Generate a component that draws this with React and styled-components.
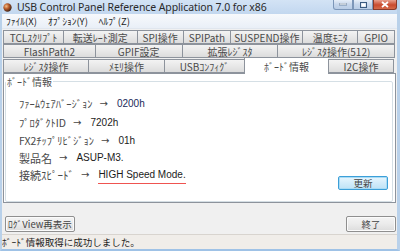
import styled, { createGlobalStyle } from 'styled-components';

const GlobalStyle = createGlobalStyle`
  html, body {
    margin: 0;
    padding: 0;
    background: #ffffff;
  }
  * {
    box-sizing: border-box;
  }
`;

const JP = `"Noto Sans CJK JP", "Noto Sans", sans-serif`;

const Window = styled.div`
  width: 400px;
  height: 251px;
  display: flex;
  flex-direction: column;
  background: #f0f0f0;
  border-left: 2px solid #b9d1ea;
  border-right: 3px solid #b9d1ea;
  border-bottom: 2px solid #9fc2e6;
  font-family: ${JP};
  overflow: hidden;
`;

const TitleBar = styled.div`
  height: 14px;
  display: flex;
  align-items: center;
  background: linear-gradient(#d3e3f5, #c2d7ef);
  margin: 0 -3px 0 -2px;
  padding-left: 3px;
`;

const TitleText = styled.span`
  font-family: "Noto Sans", sans-serif;
  font-size: 10.5px;
  color: #2a2a2a;
  margin-left: 5px;
  letter-spacing: -0.1px;
  white-space: nowrap;
`;

const CaptionButtons = styled.div`
  margin-left: auto;
  display: flex;
  align-self: flex-start;
  margin-right: 3px;
`;

const CaptionButton = styled.div`
  width: ${(p) => p.$w}px;
  height: 10px;
  border: 1px solid ${(p) => (p.$close ? '#8a3a2a' : '#7c96b8')};
  border-top: none;
  background: ${(p) =>
    p.$close
      ? 'linear-gradient(#e8a08e, #c94a2e 55%, #d56a4a)'
      : 'linear-gradient(#e6eef8, #c6d6eb 50%, #b9cde6)'};
  display: flex;
  align-items: center;
  justify-content: center;
  border-radius: ${(p) => p.$r || '0'};
`;

const MenuBar = styled.div`
  height: 15px;
  display: flex;
  align-items: center;
  gap: 11px;
  padding-left: 4px;
  background: linear-gradient(#f7f9fc, #e9eff7);
  border-bottom: 1px solid #e0e6ee;
  font-size: 9.5px;
  color: #222;
`;

const TabArea = styled.div`
  padding: 1px 2px 0 1px;
  display: flex;
  flex-direction: column;
`;

const TabRow = styled.div`
  display: flex;
  height: ${(p) => p.$h}px;
  align-items: flex-end;
`;

const Tab = styled.div`
  width: ${(p) => p.$w}px;
  height: ${(p) => (p.$active ? 17 : 14)}px;
  margin-bottom: ${(p) => (p.$active ? -1 : 0)}px;
  display: flex;
  align-items: center;
  justify-content: center;
  font-size: 10px;
  color: #4a4a4a;
  white-space: nowrap;
  border: 1px solid #8d939c;
  border-right: none;
  border-bottom: ${(p) => (p.$active ? 'none' : '1px solid #8d939c')};
  background: ${(p) => (p.$active ? '#ffffff' : 'linear-gradient(#f3f3f3, #e8e8e8 50%, #dcdcdc)')};
  position: relative;
  z-index: ${(p) => (p.$active ? 2 : 1)};
  &:last-child {
    border-right: 1px solid #8d939c;
  }
`;

const Panel = styled.div`
  height: 133px;
  margin: 0 1px 0 1px;
  background: #ffffff;
  border: 1px solid #8d939c;
  padding: 2px 2px 0 1px;
  position: relative;
`;

const GroupBox = styled.fieldset`
  margin: 0;
  height: 126px;
  border: 1px solid #d5dfe5;
  border-radius: 2px;
  padding: 6px 0 0 13px;
  display: flex;
  flex-direction: column;
  position: relative;
`;

const Legend = styled.legend`
  font-size: 10px;
  color: #505050;
  padding: 0 1px;
  margin-left: -13px;
  line-height: 11px;
`;

const InfoRow = styled.div`
  display: flex;
  align-items: center;
  height: ${(p) => p.$h}px;
  font-size: ${(p) => (p.$kanji ? 11 : 10.5)}px;
  color: #4a4a4a;
  white-space: nowrap;
`;

const Arrow = styled.span`
  margin: 0 9px 0 7px;
  font-family: "DejaVu Sans", sans-serif;
  font-size: 10px;
  color: #444;
`;

const Value = styled.span`
  font-family: "Liberation Sans", sans-serif;
  font-size: 10px;
  color: ${(p) => (p.$accent ? '#1a2a5a' : '#1c1c1c')};
  border-bottom: ${(p) => (p.$underline ? '1px solid #ef5350' : 'none')};
  padding-bottom: ${(p) => (p.$underline ? '3px' : '0')};
  margin-top: ${(p) => (p.$underline ? '4px' : '0')};
`;

const Button = styled.div`
  width: ${(p) => p.$w}px;
  height: ${(p) => p.$h || 15}px;
  display: flex;
  align-items: center;
  justify-content: center;
  font-size: 9.5px;
  color: #444;
  border-radius: 2px;
  border: 1px solid ${(p) => (p.$focus ? '#3c9fd8' : '#8f8f8f')};
  background: ${(p) =>
    p.$focus
      ? 'linear-gradient(#e9f6fd, #d2ecfa 50%, #bfe2f6)'
      : 'linear-gradient(#f4f4f4, #ebebeb 50%, #dcdcdc)'};
  box-shadow: ${(p) => (p.$focus ? 'inset 0 0 0 1px #a9dcf6' : 'inset 0 0 0 1px #fbfbfb')};
  white-space: nowrap;
`;

const UpdateWrap = styled.div`
  position: absolute;
  right: 4px;
  bottom: 11px;
`;

const Footer = styled.div`
  display: flex;
  justify-content: space-between;
  align-items: center;
  padding: 13px 1px 2px 3px;
`;

const StatusBar = styled.div`
  flex: 1;
  display: flex;
  align-items: center;
  border-top: 1px solid #d8d4cf;
  background: #f0ede9;
  font-size: 9.5px;
  color: #222;
  padding-left: 0;
`;

const row1 = [
  ['TCLｽｸﾘﾌﾟﾄ', 60],
  ['転送ﾚｰﾄ測定', 74],
  ['SPI操作', 46],
  ['SPIPath', 48],
  ['SUSPEND操作', 72],
  ['温度ﾓﾆﾀ', 55],
  ['GPIO', 38],
];
const row2 = [
  ['FlashPath2', 92],
  ['GPIF設定', 87],
  ['拡張ﾚｼﾞｽﾀ', 96],
  ['ﾚｼﾞｽﾀ操作(512)', 118],
];
const row3 = [
  ['ﾚｼﾞｽﾀ操作', 85],
  ['ﾒﾓﾘ操作', 76],
  ['USBｺﾝﾌｨｸﾞ', 80],
  ['ﾎﾞｰﾄﾞ情報', 84, true],
  ['I2C操作', 66],
];

const AppIcon = () => (
  <svg width="9" height="9" viewBox="0 0 10 10">
    <defs>
      <radialGradient id="ic" cx="35%" cy="35%" r="65%">
        <stop offset="0" stopColor="#f4c08a" />
        <stop offset="0.5" stopColor="#b85a2a" />
        <stop offset="1" stopColor="#4a2a1a" />
      </radialGradient>
    </defs>
    <circle cx="5" cy="5" r="4.6" fill="url(#ic)" />
  </svg>
);

export default function App() {
  return (
    <>
      <GlobalStyle />
      <Window>
        <TitleBar>
          <AppIcon />
          <TitleText>USB Control Panel Reference Application 7.0 for x86</TitleText>
          <CaptionButtons>
            <CaptionButton $w={20} $r="0 0 0 3px">
              <svg width="8" height="3"><rect x="0" y="0" width="8" height="2" fill="#fff" stroke="#3a5a80" strokeWidth="0.6" /></svg>
            </CaptionButton>
            <CaptionButton $w={20}>
              <svg width="7" height="6"><rect x="0.5" y="0.5" width="6" height="5" fill="none" stroke="#3a5a80" /><rect x="1.5" y="1.5" width="4" height="3" fill="#fff" /></svg>
            </CaptionButton>
            <CaptionButton $w={24} $close $r="0 0 3px 0">
              <svg width="8" height="7"><path d="M1 1 L7 6 M7 1 L1 6" stroke="#fff" strokeWidth="1.8" /></svg>
            </CaptionButton>
          </CaptionButtons>
        </TitleBar>
        <MenuBar>
          <span>ﾌｧｲﾙ(X)</span>
          <span>ｵﾌﾟｼｮﾝ(Y)</span>
          <span>ﾍﾙﾌﾟ(Z)</span>
        </MenuBar>
        <TabArea>
          <TabRow $h={14}>
            {row1.map(([t, w]) => <Tab key={t} $w={w}>{t}</Tab>)}
          </TabRow>
          <TabRow $h={14}>
            {row2.map(([t, w]) => <Tab key={t} $w={w}>{t}</Tab>)}
          </TabRow>
          <TabRow $h={15}>
            {row3.map(([t, w, a]) => <Tab key={t} $w={w} $active={a}>{t}</Tab>)}
          </TabRow>
        </TabArea>
        <Panel>
          <GroupBox>
            <Legend>ﾎﾞｰﾄﾞ情報</Legend>
            <InfoRow $h={20}>
              ﾌｧｰﾑｳｪｱﾊﾞｰｼﾞｮﾝ<Arrow>→</Arrow><Value $accent>0200h</Value>
            </InfoRow>
            <InfoRow $h={19}>
              ﾌﾟﾛﾀﾞｸﾄID<Arrow>→</Arrow><Value>7202h</Value>
            </InfoRow>
            <InfoRow $h={17}>
              FX2ﾁｯﾌﾟﾘﾋﾞｼﾞｮﾝ<Arrow>→</Arrow><Value>01h</Value>
            </InfoRow>
            <InfoRow $h={17} $kanji>
              製品名<Arrow>→</Arrow><Value>ASUP-M3.</Value>
            </InfoRow>
            <InfoRow $h={17} $kanji>
              接続ｽﾋﾟｰﾄﾞ<Arrow>→</Arrow><Value $underline>HIGH Speed Mode.</Value>
            </InfoRow>
            <UpdateWrap>
              <Button $w={50} $h={14} $focus>更新</Button>
            </UpdateWrap>
          </GroupBox>
        </Panel>
        <Footer>
          <Button $w={70} $h={16}>ﾛｸﾞView再表示</Button>
          <Button $w={50} $h={16}>終了</Button>
        </Footer>
        <StatusBar>ﾎﾞｰﾄﾞ情報取得に成功しました。</StatusBar>
      </Window>
    </>
  );
}
